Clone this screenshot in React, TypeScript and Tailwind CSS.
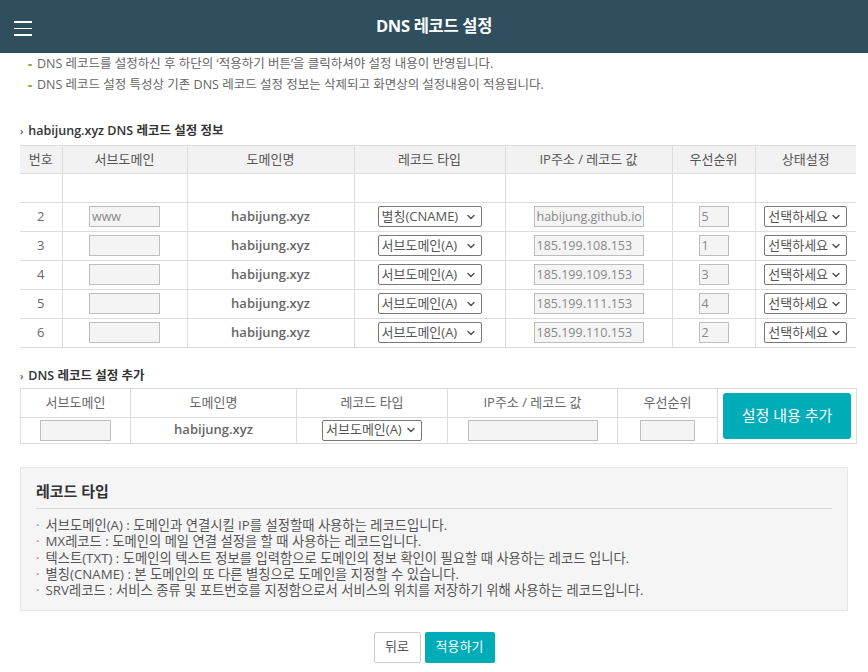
import { ChevronDown } from 'lucide-react'

const font = 'font-["Open_Sans","Noto_Sans_CJK_KR",sans-serif]'

const rows = [
  { no: 2, sub: 'www', type: '별칭(CNAME)', ip: 'habijung.github.io', pri: '5' },
  { no: 3, sub: '', type: '서브도메인(A)', ip: '185.199.108.153', pri: '1' },
  { no: 4, sub: '', type: '서브도메인(A)', ip: '185.199.109.153', pri: '3' },
  { no: 5, sub: '', type: '서브도메인(A)', ip: '185.199.111.153', pri: '4' },
  { no: 6, sub: '', type: '서브도메인(A)', ip: '185.199.110.153', pri: '2' },
]

const recordTypes = [
  '서브도메인(A) : 도메인과 연결시킬 IP를 설정할때 사용하는 레코드입니다.',
  'MX레코드 : 도메인의 메일 연결 설정을 할 때 사용하는 레코드입니다.',
  '텍스트(TXT) : 도메인의 텍스트 정보를 입력함으로 도메인의 정보 확인이 필요할 때 사용하는 레코드 입니다.',
  '별칭(CNAME) : 본 도메인의 또 다른 별칭으로 도메인을 지정할 수 있습니다.',
  'SRV레코드 : 서비스 종류 및 포트번호를 지정함으로서 서비스의 위치를 저장하기 위해 사용하는 레코드입니다.',
]

function Box({ value, className }: { value?: string; className: string }) {
  return (
    <div className={`h-[21px] overflow-hidden whitespace-nowrap border border-[#bdbdbd] bg-[#f4f4f4] px-[2px] text-left text-[12.5px] leading-[19px] text-[#888] ${className}`}>
      {value}
    </div>
  )
}

function Select({ label, className }: { label: string; className: string }) {
  return (
    <div className={`flex h-[21px] items-center justify-between rounded-[2px] border border-[#777] bg-white pl-[3px] pr-[4px] text-[13px] text-[#555] ${className}`}>
      <span className="whitespace-nowrap">{label}</span>
      <ChevronDown size={12} strokeWidth={3} className="text-[#555]" />
    </div>
  )
}

export default function App() {
  const th = 'border-l border-[#dcdcdc] first:border-l-0 font-normal text-[13px] text-[#555]'
  const td = 'border-l border-[#dcdcdc] first:border-l-0 text-[13px] text-[#666]'

  return (
    <div className={`${font} h-[672px] w-[868px] overflow-hidden bg-white`}>
      {/* header */}
      <div className="relative flex h-[53px] items-center justify-center bg-[#2f4f5f]">
        <div className="absolute left-[14px] top-[21px] flex w-[18px] flex-col gap-[5px]">
          <div className="h-[1.5px] bg-white" />
          <div className="h-[1.5px] bg-white" />
          <div className="h-[1.5px] bg-white" />
        </div>
        <h1 className="text-[16.5px] font-bold tracking-[-0.3px] text-white">DNS 레코드 설정</h1>
      </div>

      {/* notices */}
      <div className="ml-[28px] mt-[2px] space-y-[4px] text-[12.5px] text-[#666]">
        <p className="leading-[17px]">
          <span className="mr-[5px] font-extrabold text-[#94a62a]">-</span>
          DNS 레코드를 설정하신 후 하단의 ‘적용하기 버튼’을 클릭하셔야 설정 내용이 반영됩니다.
        </p>
        <p className="leading-[17px]">
          <span className="mr-[5px] font-extrabold text-[#94a62a]">-</span>
          DNS 레코드 설정 특성상 기존 DNS 레코드 설정 정보는 삭제되고 화면상의 설정내용이 적용됩니다.
        </p>
      </div>

      {/* records table */}
      <div className="mx-[20px] mt-[29px]">
        <h2 className="mb-[4px] text-[12.5px] font-semibold text-[#333]">
          <span className="mr-[5px] text-[10px] text-[#555]">›</span>habijung.xyz DNS 레코드 설정 정보
        </h2>
        <table className="w-[836px] table-fixed border-collapse text-center">
          <colgroup>
            <col className="w-[42px]" />
            <col className="w-[125px]" />
            <col className="w-[167px]" />
            <col className="w-[151px]" />
            <col className="w-[167px]" />
            <col className="w-[83px]" />
            <col className="w-[101px]" />
          </colgroup>
          <thead>
            <tr className="h-[28px] border-y border-[#dcdcdc] bg-[#f2f2f2]">
              {['번호', '서브도메인', '도메인명', '레코드 타입', 'IP주소 / 레코드 값', '우선순위', '상태설정'].map((h) => (
                <th key={h} className={th}>{h}</th>
              ))}
            </tr>
          </thead>
          <tbody>
            <tr className="h-[29px] border-b border-[#dcdcdc]">
              {Array.from({ length: 7 }).map((_, i) => (
                <td key={i} className={td} />
              ))}
            </tr>
            {rows.map((r) => (
              <tr key={r.no} className="h-[29px] border-b border-[#dcdcdc]">
                <td className={td}>{r.no}</td>
                <td className={td}>
                  <Box value={r.sub} className="mx-auto w-[71px]" />
                </td>
                <td className={`${td} text-[13.5px] font-semibold text-[#444]`}>habijung.xyz</td>
                <td className={td}>
                  <Select label={r.type} className="mx-auto w-[104px]" />
                </td>
                <td className={td}>
                  <Box value={r.ip} className="mx-auto w-[110px]" />
                </td>
                <td className={td}>
                  <Box value={r.pri} className="mx-auto w-[30px]" />
                </td>
                <td className={td}>
                  <Select label="선택하세요" className="mx-auto w-[83px]" />
                </td>
              </tr>
            ))}
          </tbody>
        </table>
      </div>

      {/* add record */}
      <div className="mx-[20px] mt-[19px]">
        <h2 className="mb-[2px] text-[12.5px] font-semibold text-[#333]">
          <span className="mr-[5px] text-[10px] text-[#555]">›</span>DNS 레코드 설정 추가
        </h2>
        <table className="w-[836px] table-fixed border-collapse border border-[#dcdcdc] text-center">
          <colgroup>
            <col className="w-[110px]" />
            <col className="w-[166px]" />
            <col className="w-[151px]" />
            <col className="w-[170px]" />
            <col className="w-[100px]" />
            <col className="w-[139px]" />
          </colgroup>
          <tbody>
            <tr className="h-[29px] border-b border-[#dcdcdc]">
              {['서브도메인', '도메인명', '레코드 타입', 'IP주소 / 레코드 값', '우선순위'].map((h) => (
                <td key={h} className={`${td} text-[#555]`}>{h}</td>
              ))}
              <td rowSpan={2} className={td}>
                <button className="mx-auto flex h-[46px] w-[128px] items-center justify-center rounded-[3px] bg-[#00acb8] text-[15px] text-white">
                  설정 내용 추가
                </button>
              </td>
            </tr>
            <tr className="h-[26px]">
              <td className={td}>
                <Box className="mx-auto w-[71px]" />
              </td>
              <td className={`${td} text-[13.5px] font-semibold text-[#444]`}>habijung.xyz</td>
              <td className={td}>
                <Select label="서브도메인(A)" className="mx-auto w-[100px]" />
              </td>
              <td className={td}>
                <Box className="mx-auto w-[130px]" />
              </td>
              <td className={td}>
                <Box className="mx-auto w-[55px]" />
              </td>
            </tr>
          </tbody>
        </table>
      </div>

      {/* record type info */}
      <div className="mx-[20px] mt-[23px] h-[144px] border border-[#e6e6e6] bg-[#f5f5f5] px-[15px] pt-[12px]">
        <h3 className="border-b border-[#d8d8d8] pb-[6px] text-[15px] font-bold text-[#333]">레코드 타입</h3>
        <ul className="mt-[8px] text-[13.3px] leading-[16.3px] text-[#555]">
          {recordTypes.map((t) => (
            <li key={t}>
              <span className="mr-[6px] text-[#888]">·</span>
              {t}
            </li>
          ))}
        </ul>
      </div>

      {/* actions */}
      <div className="mt-[21px] flex justify-center gap-[4px]">
        <button className="h-[31px] w-[47px] rounded-[2px] border border-[#ccc] bg-white text-[13px] text-[#555]">뒤로</button>
        <button className="h-[31px] w-[70px] rounded-[2px] bg-[#00acb8] text-[13px] text-white">적용하기</button>
      </div>
    </div>
  )
}
